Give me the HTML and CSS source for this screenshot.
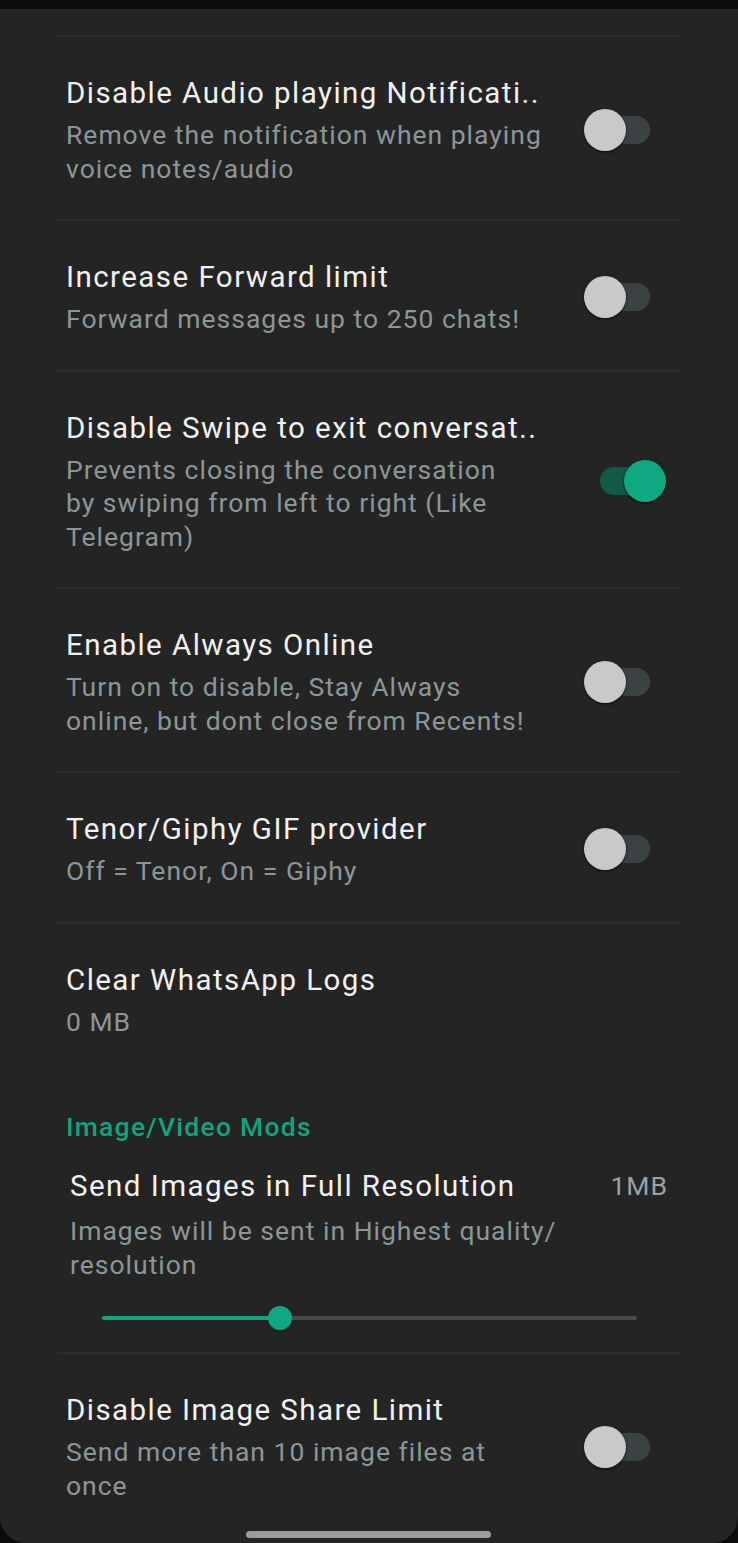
FILE: index.html
```html
<!DOCTYPE html>
<html lang="en">
<head>
<meta charset="utf-8">
<title>Mods settings</title>
<link rel="stylesheet" href="styles.css">
</head>
<body>
<div class="screen">
  <div class="list">
    <div class="divider"></div>

    <div class="item">
      <div class="text">
        <div class="title">Disable Audio playing Notificati..</div>
        <div class="summary">Remove the notification when playing<br>voice notes/audio</div>
      </div>
      <div class="switch"><span class="track"></span><span class="thumb"></span></div>
    </div>
    <div class="divider"></div>

    <div class="item">
      <div class="text">
        <div class="title">Increase Forward limit</div>
        <div class="summary">Forward messages up to 250 chats!</div>
      </div>
      <div class="switch"><span class="track"></span><span class="thumb"></span></div>
    </div>
    <div class="divider"></div>

    <div class="item">
      <div class="text">
        <div class="title">Disable Swipe to exit conversat..</div>
        <div class="summary">Prevents closing the conversation<br>by swiping from left to right (Like<br>Telegram)</div>
      </div>
      <div class="switch on"><span class="track"></span><span class="thumb"></span></div>
    </div>
    <div class="divider"></div>

    <div class="item">
      <div class="text">
        <div class="title">Enable Always Online</div>
        <div class="summary">Turn on to disable, Stay Always<br>online, but dont close from Recents!</div>
      </div>
      <div class="switch"><span class="track"></span><span class="thumb"></span></div>
    </div>
    <div class="divider"></div>

    <div class="item">
      <div class="text">
        <div class="title">Tenor/Giphy GIF provider</div>
        <div class="summary">Off = Tenor, On = Giphy</div>
      </div>
      <div class="switch"><span class="track"></span><span class="thumb"></span></div>
    </div>
    <div class="divider"></div>

    <div class="item">
      <div class="text">
        <div class="title">Clear WhatsApp Logs</div>
        <div class="summary">0 MB</div>
      </div>
    </div>

    <div class="section">Image/Video Mods</div>

    <div class="item seek">
      <div class="seek-head">
        <div class="text">
          <div class="title">Send Images in Full Resolution</div>
          <div class="summary">Images will be sent in Highest quality/<br>resolution</div>
        </div>
        <div class="value">1MB</div>
      </div>
      <div class="slider">
        <span class="slider-track"></span>
        <span class="slider-fill" style="width: 178px"></span>
        <span class="slider-thumb" style="left: 166px"></span>
      </div>
    </div>
    <div class="divider"></div>

    <div class="item">
      <div class="text">
        <div class="title">Disable Image Share Limit</div>
        <div class="summary">Send more than 10 image files at<br>once</div>
      </div>
      <div class="switch"><span class="track"></span><span class="thumb"></span></div>
    </div>
  </div>
  <div class="home-bar"></div>
</div>
</body>
</html>
```

FILE: styles.css
```css
html, body {
  margin: 0;
  padding: 0;
  background: #0b0b0b;
}

body {
  font-family: Roboto, "Noto Sans", "Liberation Sans", sans-serif;
  -webkit-font-smoothing: antialiased;
}

.screen {
  margin-top: 9px;
  height: 1534px;
  background: #242424;
  border-radius: 0 0 26px 26px;
  position: relative;
  box-sizing: border-box;
}

.list {
  margin: 0 58px 0 57px;
  padding-top: 26px;
}

.divider {
  height: 2px;
  background: #2d2d2d;
}

.item {
  display: flex;
  align-items: center;
  padding: 37px 0 34px 9px;
}

.text {
  flex: 1;
  min-width: 0;
}

.title {
  font-size: 29.5px;
  letter-spacing: 1.45px;
  line-height: 38px;
  color: #f1f1f1;
  white-space: nowrap;
}

.summary {
  margin-top: 6px;
  font-size: 26.5px;
  letter-spacing: 1px;
  line-height: 33.5px;
  color: #8b969b;
  white-space: nowrap;
}

.switch {
  position: relative;
  width: 72px;
  height: 42px;
  margin-right: 24px;
  flex: none;
}

.switch.on {
  margin-right: 14px;
}

.track {
  position: absolute;
  left: 6px;
  right: 6px;
  top: 7px;
  height: 28px;
  border-radius: 14px;
  background: #3b4243;
}

.thumb {
  position: absolute;
  left: 0;
  top: 0;
  width: 42px;
  height: 42px;
  border-radius: 50%;
  background: #c9c9c9;
  box-shadow: 0 1px 3px rgba(0, 0, 0, 0.7);
}

.switch.on .track {
  background: #0f5a48;
}

.switch.on .thumb {
  left: auto;
  right: 0;
  background: #0ea982;
}

.section {
  padding: 38px 0 0 9px;
  font-size: 26.5px;
  letter-spacing: 1.25px;
  font-weight: 500;
  line-height: 34px;
  color: #12a37e;
}

.item.seek {
  display: block;
  padding: 23px 12px 22px 13px;
}

.seek-head {
  display: flex;
  align-items: flex-start;
}

.seek .summary {
  margin-top: 9px;
}

.value {
  font-size: 26.5px;
  letter-spacing: 1px;
  line-height: 38px;
  color: #9aa2a6;
  flex: none;
}

.slider {
  position: relative;
  height: 24px;
  margin: 25px 31px 0 32px;
}

.slider-track {
  position: absolute;
  left: 0;
  right: 0;
  top: 10px;
  height: 4px;
  border-radius: 2px;
  background: #4a4a4a;
}

.slider-fill {
  position: absolute;
  left: 0;
  top: 10px;
  height: 4px;
  border-radius: 2px;
  background: #12a37e;
}

.slider-thumb {
  position: absolute;
  top: 0;
  width: 24px;
  height: 24px;
  border-radius: 50%;
  background: #0ea982;
}

.home-bar {
  position: absolute;
  left: 246px;
  bottom: 5px;
  width: 245px;
  height: 7px;
  border-radius: 4px;
  background: #9b9b9b;
}
```
